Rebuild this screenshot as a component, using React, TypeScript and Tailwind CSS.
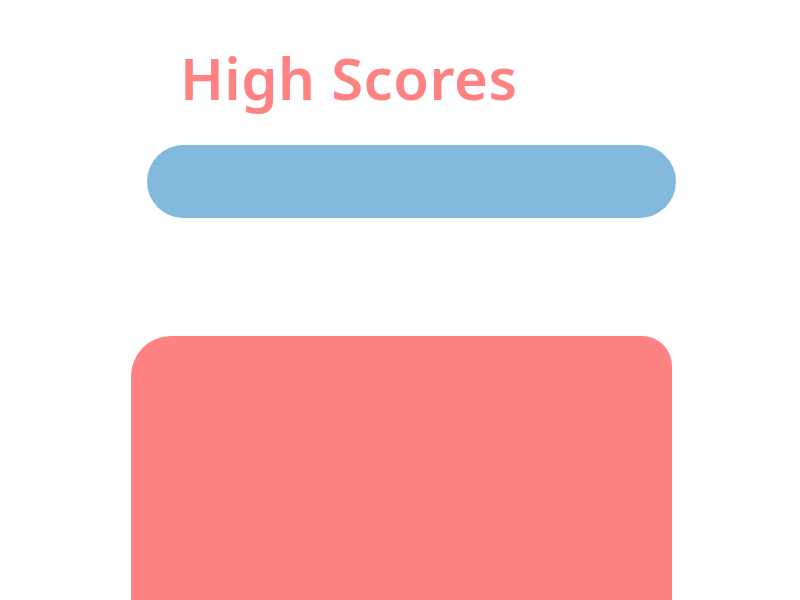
export default function App() {
  return (
    <div className="h-[600px] w-[800px] overflow-hidden bg-white">
      <div className="flex flex-col">
        <h1 className="pl-[180px] pt-[40px] text-[58px] leading-[76px] font-semibold tracking-[0.5px] text-[#ff8282] [font-family:'Comic_Sans_MS','Noto_Sans',sans-serif]">
          High Scores
        </h1>
        <div className="mt-[29px] ml-[147px] h-[73px] w-[529px] rounded-[37px] bg-[#82b9dd]" />
        <div className="mt-[118px] ml-[131px] h-[300px] w-[541px] rounded-tl-[40px] rounded-tr-[30px] bg-[#ff8282]" />
      </div>
    </div>
  );
}
